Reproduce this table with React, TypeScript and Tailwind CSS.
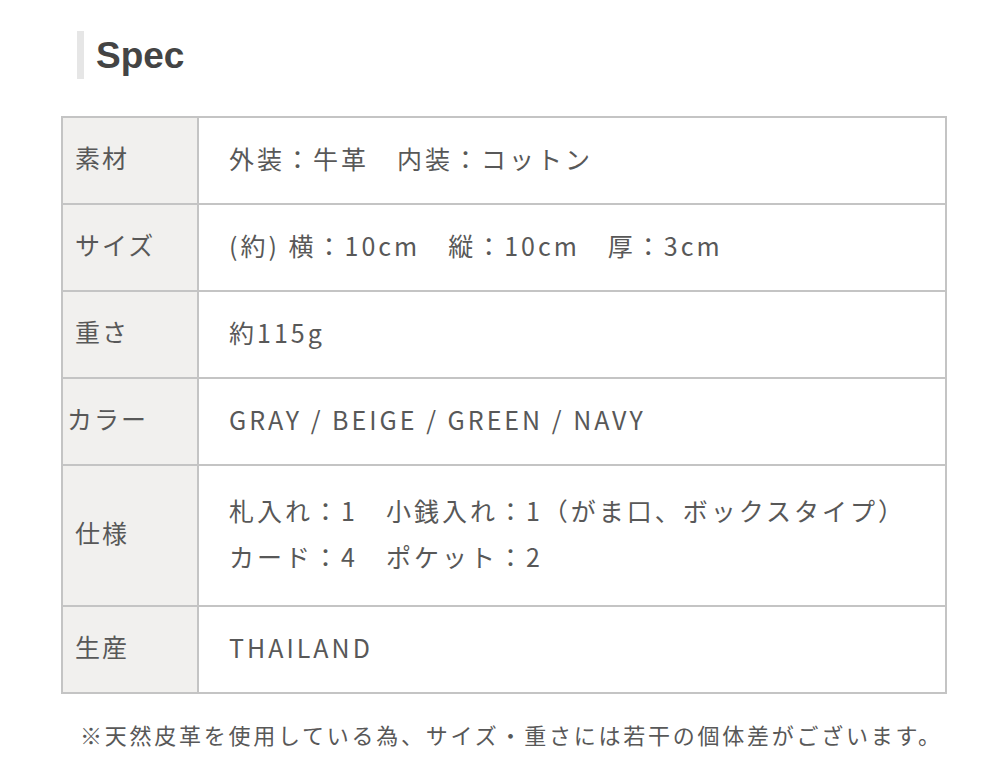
const specRows = [
  { label: "素材", value: ["外装：牛革　内装：コットン"], h: "h-[85px]" },
  { label: "サイズ", value: ["(約) 横：10cm　縦：10cm　厚：3cm"], h: "h-[87px]" },
  { label: "重さ", value: ["約115g"], h: "h-[87px]" },
  { label: "カラー", value: ["GRAY / BEIGE / GREEN / NAVY"], h: "h-[87px]", tight: true },
  {
    label: "仕様",
    value: ["札入れ：1　小銭入れ：1（がま口、ボックスタイプ）", "カード：4　ポケット：2"],
    h: "h-[141px]",
  },
  { label: "生産", value: ["THAILAND"], h: "h-[87px]" },
];

export default function App() {
  return (
    <div
      className="w-[1000px] h-[782px] bg-white text-[#585858] overflow-hidden"
      style={{ fontFamily: '"Noto Sans CJK JP", "Noto Sans", sans-serif' }}
    >
      {/* heading */}
      <div className="flex items-center pl-[77px] pt-[31px]">
        <div className="w-[7px] h-[48px] bg-[#e6e6e6]" />
        <h2
          className="ml-[12px] text-[37px] font-bold text-[#444] leading-none"
          style={{ fontFamily: '"Liberation Sans", Arial, sans-serif' }}
        >
          Spec
        </h2>
      </div>

      {/* table */}
      <div className="ml-[61px] mt-[37px] w-[886px] border-2 border-[#c4c4c4]">
        {specRows.map((row, i) => (
          <div
            key={row.label}
            className={`flex ${row.h} ${i > 0 ? "border-t-2 border-[#c4c4c4]" : ""}`}
          >
            <div
              className={`w-[136px] shrink-0 bg-[#f1f0ee] border-r-2 border-[#c4c4c4] flex items-center pb-[6px] text-[25px] tracking-[2px] ${
                row.tight ? "pl-[4px]" : "pl-[12px]"
              }`}
            >
              {row.label}
            </div>
            <div className="flex-1 flex flex-col justify-center pl-[30px] pb-[6px] text-[25px] tracking-[3px] leading-[46px]">
              {row.value.map((line) => (
                <div key={line}>{line}</div>
              ))}
            </div>
          </div>
        ))}
      </div>

      {/* note */}
      <p className="mt-[24px] pl-[80px] text-[22px] tracking-[2.75px] leading-[33px] text-[#585858]">
        ※天然皮革を使用している為、サイズ・重さには若干の個体差がございます。
      </p>
    </div>
  );
}
